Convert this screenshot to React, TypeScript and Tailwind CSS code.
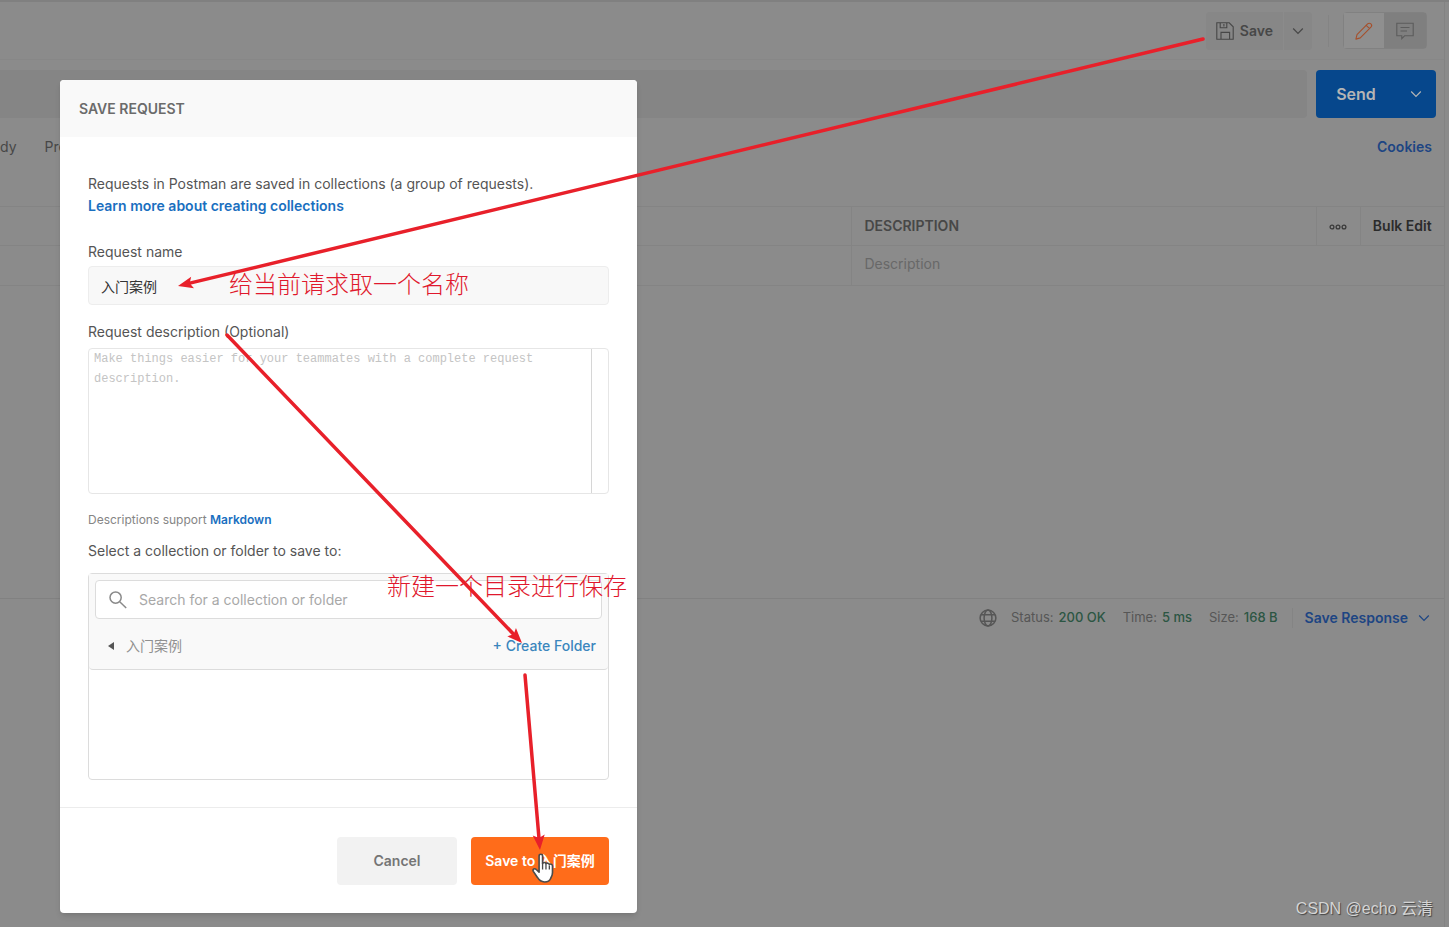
import React from 'react';

type IconProps = { className?: string };

const Chevron = ({ className }: IconProps) => (
  <svg viewBox="0 0 12 12" className={className} fill="none" stroke="currentColor" strokeWidth="1.2" aria-hidden="true">
    <path d="M1.2 3.5 6 8.3l4.800-4.800" />
  </svg>
);

const Floppy = () => (
  <svg viewBox="0 0 18 18" className="size-[18px]" fill="none" stroke="currentColor" strokeWidth="1.100" aria-hidden="true">
    <path d="M.8.8h12.400l4 4v12.400H.8zM4.200.8v5h6.600v-5M7.900 2v2.400M5 17.200V10.400h8.600v6.800" />
  </svg>
);

const Pencil = () => (
  <svg viewBox="0 0 18 18" className="size-[18px]" fill="none" stroke="currentColor" strokeWidth="1.100" strokeLinejoin="round" aria-hidden="true">
    <path d="M.9 17.100 2 12.600 12.600 1.900a2.300 2.300 0 0 1 3.300 3.300L5.300 15.900zM11.200 3.300l3.400 3.300" />
  </svg>
);

const Comment = () => (
  <svg viewBox="0 0 18 18" className="size-[18px]" fill="none" stroke="currentColor" strokeWidth="1.100" aria-hidden="true">
    <path d="M.8 1.200h16.400v12.600H8.600l-2.800 2.800v-2.800h-5zM4.500 5.500h9M4.500 9h6.500" />
  </svg>
);

const Globe = () => (
  <svg viewBox="0 0 18 18" className="size-[18px]" fill="none" stroke="currentColor" strokeWidth="1.500" aria-hidden="true">
    <circle cx="9" cy="9" r="7.900" />
    <ellipse cx="9" cy="9" rx="3.900" ry="7.900" />
    <path d="M2 5.700h14M2 12.300h14" />
  </svg>
);

const Search = () => (
  <svg viewBox="0 0 18 18" className="size-[18px] shrink-0" fill="none" stroke="currentColor" strokeWidth="1.500" aria-hidden="true">
    <circle cx="6.600" cy="6.600" r="5.600" />
    <path d="m10.700 10.700 6.500 6.300" />
  </svg>
);

const Hand = () => (
  <svg viewBox="0 0 22 30" preserveAspectRatio="none" className="absolute left-[532px] top-[853px] h-[31px] w-6" aria-hidden="true">
    <path
      d="M6.500 2.800c0-2.200 3.200-2.200 3.200 0v7.500c.3-1.500 3-1.400 3.100.3.600-1.300 3-1 3.100.7.700-1 2.900-.7 2.900 1.200v6.300c0 2.600-.9 3.900-1.600 5.600-.8 2.300-2.700 3.600-5.700 3.600-3.500 0-5.100-1.800-6.500-4.300L1.200 17.700c-1-2 1.300-3.300 2.700-1.800l2.600 2.600z"
      fill="#fff"
      stroke="#4b4b4b"
      strokeWidth="1.500"
      strokeLinejoin="round"
    />
    <path d="M9.700 10v6M12.800 11v5M15.900 12v4" stroke="#4b4b4b" strokeWidth="1.200" fill="none" />
  </svg>
);

type Point = [number, number];

function Arrow({ from, to }: { from: Point; to: Point }) {
  const angle = Math.atan2(to[1] - from[1], to[0] - from[0]);
  const baseX = to[0] - Math.cos(angle) * 10;
  const baseY = to[1] - Math.sin(angle) * 10;
  return (
    <g>
      <line x1={from[0]} y1={from[1]} x2={baseX} y2={baseY} stroke="#e8202a" strokeWidth="3.500" strokeLinecap="round" />
      <path
        d="M0 0-15-6-12 0-15 6z"
        fill="#e8202a"
        transform={`translate(${to[0]} ${to[1]}) rotate(${(angle * 180) / Math.PI})`}
      />
    </g>
  );
}

function Workspace() {
  return (
    <div className="flex min-h-screen flex-col border-t-2 border-[#808080] bg-[#8b8b8b] text-sm text-[#474747]">
      <div className="mr-1 flex flex-1 flex-col border-r border-[#838383]">
        <header className="flex h-[58px] items-center justify-end border-b border-[#878787] pr-[17px]">
          <div className="flex h-[38px] items-center rounded bg-[#878787]">
            <button type="button" className="flex h-full items-center gap-[6px] px-[10px] font-semibold">
              <Floppy />
              Save
            </button>
            <button type="button" aria-label="Save options" className="flex h-full items-center border-l border-[#8b8b8b] px-2">
              <Chevron className="size-3" />
            </button>
          </div>
          <div className="mr-[14px] ml-4 h-8 w-px bg-[#848484]" />
          <div className="flex h-[37px] rounded border border-[#818181]">
            <button type="button" aria-label="Edit" className="flex w-10 items-center justify-center bg-[#8f8f8f] text-[#a5502c]">
              <Pencil />
            </button>
            <button type="button" aria-label="Comments" className="flex w-[42px] items-center justify-center bg-[#7f7f7f] text-[#5c5c5c]">
              <Comment />
            </button>
          </div>
        </header>

        <div className="mt-[10px] flex gap-[9px] pr-2">
          <input aria-label="Request URL" className="h-12 min-w-0 flex-1 rounded-r bg-[#858585]" />
          <div className="flex h-12 w-[120px] rounded bg-[#06478c] text-[#b5b5b5]">
            <button type="button" className="flex-1 text-base font-semibold">Send</button>
            <button type="button" aria-label="Send options" className="flex w-10 items-center justify-center">
              <Chevron className="size-3" />
            </button>
          </div>
        </div>

        <nav className="flex h-[58px] items-center gap-7 pr-3">
          <a href="#body">dy</a>
          <a href="#prerequest">Pre</a>
          <a href="#cookies" className="ml-auto font-semibold text-[#1d4583]">Cookies</a>
        </nav>

        <div className="mt-[30px] h-[392px]">
          <table className="w-full table-fixed border-collapse text-left">
            <thead>
              <tr className="h-[39px] border-y border-[#848484]">
                <th className="w-[59%]" aria-label="Key and value" />
                <th className="border-l border-[#848484] px-3 font-semibold">DESCRIPTION</th>
                <th className="w-11 border-x border-[#848484] text-center">
                  <button type="button" aria-label="Columns" className="align-middle">
                    <svg viewBox="0 0 18 6" className="h-[6px] w-[18px]" fill="none" stroke="#3a3a3a" strokeWidth="1.300" aria-hidden="true">
                      <circle cx="3" cy="3" r="1.900" />
                      <circle cx="9" cy="3" r="1.900" />
                      <circle cx="15" cy="3" r="1.900" />
                    </svg>
                  </button>
                </th>
                <th className="w-[84px] text-center font-semibold text-[#2b2b2b]">
                  <button type="button">Bulk Edit</button>
                </th>
              </tr>
            </thead>
            <tbody>
              <tr className="h-10 border-b border-[#848484]">
                <td />
                <td colSpan={3} className="border-l border-[#848484] px-3 pb-[3px] text-[#686868]">Description</td>
              </tr>
            </tbody>
          </table>
        </div>

        <section className="flex h-[38px] items-center justify-end border-t border-[#818181] pr-[14px] text-[#565656]">
          <Globe />
          <dl className="ml-[14px] flex gap-[17px] text-[13px]">
            <div className="flex gap-[5px]"><dt>Status:</dt><dd className="font-medium text-[#2c5643]">200 OK</dd></div>
            <div className="flex gap-[5px]"><dt>Time:</dt><dd className="font-medium text-[#2c5643]">5 ms</dd></div>
            <div className="flex gap-[5px]"><dt>Size:</dt><dd className="font-medium text-[#2c5643]">168 B</dd></div>
          </dl>
          <button type="button" className="ml-[14px] flex items-center gap-[10px] border-l border-[#848484] pl-3 font-semibold text-[#1d4583]">
            Save Response
            <Chevron className="size-3" />
          </button>
        </section>
      </div>
    </div>
  );
}

function SaveDialog() {
  return (
    <form
      role="dialog"
      aria-labelledby="dialog-title"
      className="absolute left-[60px] top-20 w-[577px] overflow-hidden rounded bg-white text-sm text-[#555] shadow-md"
    >
      <h2 id="dialog-title" className="bg-[#f9f9f9] px-[19px] pt-[19px] pb-[18px] leading-5 font-semibold text-[#6b6b6b]">SAVE REQUEST</h2>
      <div className="flex flex-col px-7 pt-9 pb-[27px]">
        <p className="leading-[22px]">
          Requests in Postman are saved in collections (a group of requests).
          <br />
          <a href="#collections" className="font-semibold text-[#1a6fc0]">Learn more about creating collections</a>
        </p>

        <label htmlFor="request-name" className="mt-[25px] leading-5">Request name</label>
        <input
          id="request-name"
          defaultValue="入门案例"
          className="mt-1 h-[39px] rounded border border-[#ededed] bg-[#f8f8f8] px-3 text-[#333]"
        />

        <label htmlFor="request-description" className="mt-[17px] leading-5">Request description (Optional)</label>
        <div className="mt-[6px] flex h-[146px] rounded border border-[#e6e6e6]">
          <textarea
            id="request-description"
            placeholder="Make things easier for your teammates with a complete request description."
            className="flex-1 resize-none px-[5px] font-['Liberation_Mono',monospace] text-xs leading-5 placeholder:text-[#c4c4c4]"
          />
          <div className="w-[17px] border-l border-[#d6d6d6]" />
        </div>
        <p className="mt-4 text-xs leading-5 text-[#858585]">
          Descriptions support <a href="#markdown" className="font-semibold text-[#1a6fc0]">Markdown</a>
        </p>

        <label htmlFor="collection-search" className="mt-[11px] leading-5">Select a collection or folder to save to:</label>
        <div className="mt-3 h-[207px] rounded border border-[#dcdcdc]">
          <div className="rounded-b border-b border-[#dcdcdc] bg-[#f9f9f9] px-[6px] pt-[6px]">
            <div className="flex h-[39px] items-center gap-3 rounded border border-[#dcdcdc] bg-white px-[13px] text-[#8a8a8a]">
              <Search />
              <input
                id="collection-search"
                placeholder="Search for a collection or folder"
                className="min-w-0 flex-1 placeholder:text-[#a8a8a8]"
              />
            </div>
            <div className="flex h-[50px] items-center justify-between pt-[3px] pr-[6px] pl-[13px]">
              <button type="button" className="flex items-center gap-3 text-[#909090]">
                <svg viewBox="0 0 6 8" className="h-2 w-[6px]" fill="#555" aria-hidden="true">
                  <path d="M6 0v8L0 4z" />
                </svg>
                入门案例
              </button>
              <button type="button" className="font-medium text-[#3b86bd]">+ Create Folder</button>
            </div>
          </div>
        </div>
      </div>
      <footer className="flex justify-end gap-[14px] border-t border-[#ececec] px-7 pt-[29px] pb-7">
        <button type="button" className="h-12 w-[120px] rounded bg-[#f2f2f2] font-semibold text-[#757575]">Cancel</button>
        <button type="button" className="h-12 w-[138px] rounded bg-[#ff6c1a] font-semibold whitespace-nowrap text-white">Save to 入门案例</button>
      </footer>
    </form>
  );
}

const noteStyle =
  "absolute whitespace-nowrap font-['Noto_Sans_CJK_SC',sans-serif] text-2xl leading-8 font-light text-[#e0182d]";

export default function App() {
  return (
    <div className="relative overflow-hidden font-['Inter','Noto_Sans_CJK_SC',sans-serif]">
      <Workspace />
      <SaveDialog />
      <p className={`${noteStyle} left-[229px] top-[267px]`}>给当前请求取一个名称</p>
      <p className={`${noteStyle} left-[387px] top-[569px]`}>新建一个目录进行保存</p>
      <svg className="pointer-events-none absolute top-0 left-0 h-full w-full" aria-hidden="true">
        <Arrow from={[1203, 39]} to={[178, 286]} />
        <Arrow from={[227, 335]} to={[522, 643]} />
        <Arrow from={[525, 675]} to={[540, 850]} />
      </svg>
      <Hand />
      <p className="absolute right-4 bottom-2 font-['Liberation_Sans','Noto_Sans_CJK_SC',sans-serif] text-base leading-5 text-[#d4d4d4] [text-shadow:1px_1px_1px_#444]">
        CSDN @echo 云清
      </p>
    </div>
  );
}
